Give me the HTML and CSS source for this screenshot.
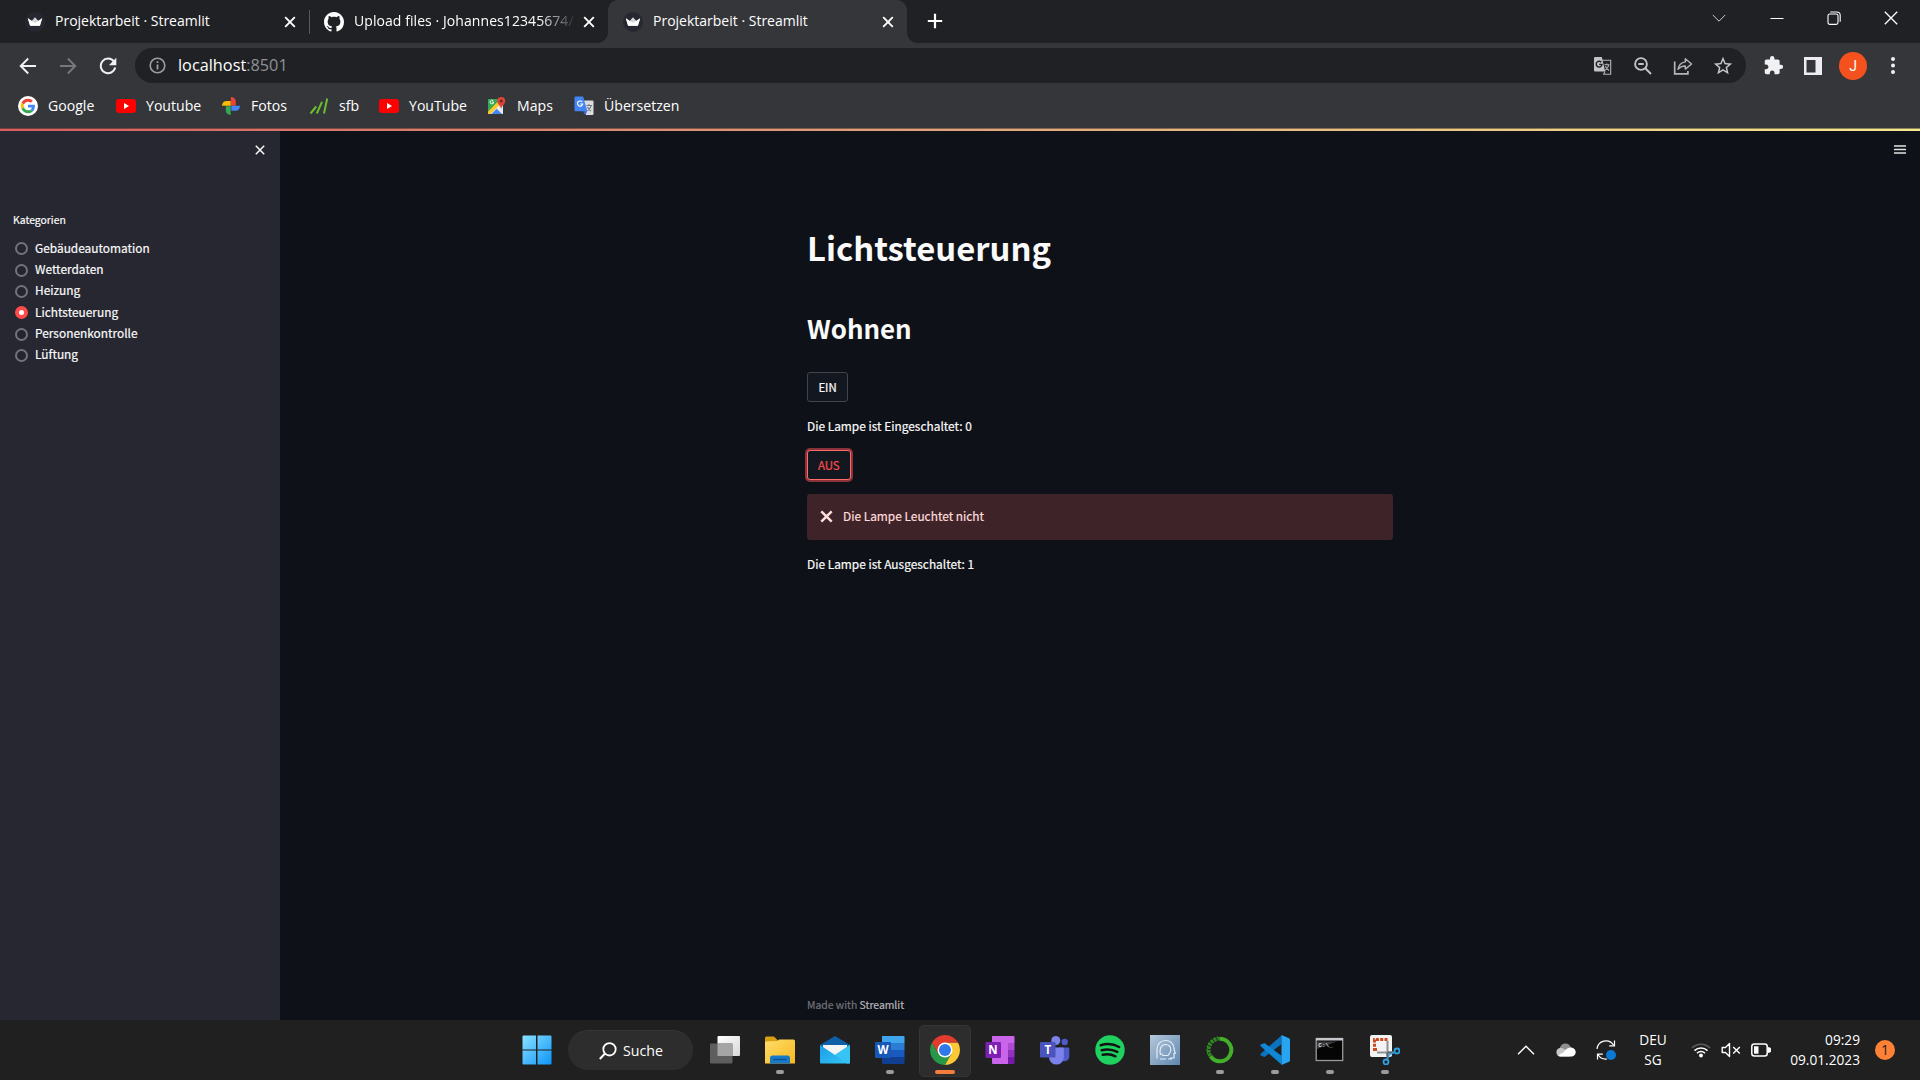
FILE: index.html
```html
<!DOCTYPE html>
<html lang="de">
<head>
<meta charset="utf-8">
<title>Projektarbeit · Streamlit</title>
<link rel="stylesheet" href="styles.css">
</head>
<body>
<svg class="defs" width="0" height="0">
  <defs>
    <linearGradient id="win" x1="0" y1="0" x2="1" y2="1"><stop offset="0" stop-color="#8be2ff"/><stop offset="1" stop-color="#0c94f8"/></linearGradient>
    <linearGradient id="folder" x1="0" y1="0" x2="1" y2="1"><stop offset="0" stop-color="#ffdc6b"/><stop offset="1" stop-color="#f6b91d"/></linearGradient>
    <linearGradient id="mail" x1="0" y1="0" x2="1" y2="1"><stop offset="0" stop-color="#1b9de8"/><stop offset="1" stop-color="#35c5f5"/></linearGradient>
    <linearGradient id="port" x1="0" y1="0" x2="1" y2="1"><stop offset="0" stop-color="#b4c8da"/><stop offset="1" stop-color="#5f86b0"/></linearGradient>
    <linearGradient id="view" x1="0" y1="0" x2="1" y2="1"><stop offset="0" stop-color="#ffffff"/><stop offset="1" stop-color="#d8d8d8"/></linearGradient>
    <symbol id="crown" viewBox="0 0 20 20"><circle cx="10" cy="10" r="10" fill="#262730"/><path d="M2.8 6.3 6.7 9 10 5.2 13.3 9l3.9-2.7-2.3 7.4H5.1z" fill="#d5d6da"/><path d="M2.8 6.3 10 11l7.2-4.7-2.3 7.4H5.1z" fill="#fff"/></symbol>
    <symbol id="x" viewBox="0 0 12 12"><path d="M1.2 1.2l9.6 9.6M10.8 1.2l-9.6 9.6" stroke="#fff" stroke-width="1.9" fill="none"/></symbol>
    <symbol id="yt" viewBox="0 0 20 20"><rect y="3" width="20" height="14" rx="3.2" fill="#f00"/><path d="M8 7.1v5.8l5-2.9z" fill="#fff"/></symbol>
  </defs>
</svg>

<header class="tabs">
  <div class="tab">
    <svg class="fav"><use href="#crown"/></svg><span class="tab-title">Projektarbeit · Streamlit</span><svg class="tab-x"><use href="#x"/></svg>
  </div>
  <div class="tab tab-divided">
    <svg class="fav" viewBox="0 0 16 16"><path fill="#fff" d="M8 0C3.58 0 0 3.58 0 8c0 3.54 2.29 6.53 5.47 7.59.4.07.55-.17.55-.38 0-.19-.01-.82-.01-1.49-2.01.37-2.53-.49-2.69-.94-.09-.23-.48-.94-.82-1.13-.28-.15-.68-.52-.01-.53.63-.01 1.08.58 1.23.82.72 1.21 1.87.87 2.33.66.07-.52.28-.87.51-1.07-1.78-.2-3.64-.89-3.64-3.95 0-.87.31-1.59.82-2.15-.08-.2-.36-1.02.08-2.12 0 0 .67-.21 2.2.82.64-.18 1.32-.27 2-.27s1.36.09 2 .27c1.53-1.04 2.2-.82 2.2-.82.44 1.1.16 1.92.08 2.12.51.56.82 1.27.82 2.15 0 3.07-1.87 3.75-3.65 3.95.29.25.54.73.54 1.48 0 1.07-.01 1.93-.01 2.2 0 .21.15.46.55.38A8.01 8.01 0 0 0 16 8c0-4.42-3.58-8-8-8z"/></svg><span class="tab-title tab-fade">Upload files · Johannes12345674/</span><svg class="tab-x"><use href="#x"/></svg>
  </div>
  <div class="tab tab-active">
    <svg class="fav"><use href="#crown"/></svg><span class="tab-title">Projektarbeit · Streamlit</span><svg class="tab-x"><use href="#x"/></svg>
  </div>
  <svg class="new-tab" viewBox="0 0 16 16"><path d="M8 .8v14.4M.8 8h14.4" stroke="#fff" stroke-width="2.2"/></svg>
  <div class="win-buttons">
    <svg viewBox="0 0 14 14"><path d="M.8 4 7 10.2 13.2 4" stroke="#cfcfd2" fill="none"/></svg>
    <svg viewBox="0 0 14 14"><path d="M.5 7.5h13" stroke="#fff"/></svg>
    <svg viewBox="0 0 14 14"><rect x="1" y="3" width="10" height="10.4" rx="1.8" stroke="#fff" stroke-width="1.1" fill="none"/><path d="M3.3 1h6.5a3.4 3.4 0 0 1 3.4 3.4v6.4" stroke="#fff" stroke-width="1.1" fill="none"/></svg>
    <svg viewBox="0 0 14 14"><path d="M.8.8l12.4 12.4M13.2.8.8 13.2" stroke="#fff" stroke-width="1.3"/></svg>
  </div>
</header>

<div class="toolbar">
  <span class="tool"><svg width="18" height="18" viewBox="0 0 18 18"><path d="M17 9H2M9.2 1.5 1.7 9l7.5 7.5" stroke="#f1f1f4" stroke-width="1.9" fill="none"/></svg></span>
  <span class="tool"><svg width="18" height="18" viewBox="0 0 18 18"><path d="M1 9h15M8.8 1.5 16.3 9l-7.5 7.5" stroke="#77787b" stroke-width="1.9" fill="none"/></svg></span>
  <span class="tool"><svg width="18" height="18" viewBox="0 0 18 18"><path d="M15 4.6A7.3 7.3 0 1 0 16.2 10.6" stroke="#f1f1f4" stroke-width="2" fill="none"/><path d="M17.3.8v7.4H9.9z" fill="#f1f1f4"/></svg></span>
  <div class="omnibox">
    <svg class="info" width="17" height="17" viewBox="0 0 17 17"><circle cx="8.5" cy="8.5" r="7.3" stroke="#9a9da1" stroke-width="1.6" fill="none"/><path d="M8.5 7.5v5M8.5 4.2v1.9" stroke="#9a9da1" stroke-width="1.8"/></svg>
    <span class="url">localhost<span class="port">:8501</span></span>
    <span class="tool"><svg width="18" height="18" viewBox="0 0 18 18"><path d="M7.5 3.3h9.2v13.9H9.3" stroke="#b4b5b9" stroke-width="1.1" fill="none"/><path d="M1.2 0h6.6l3.4 14.5h-10A1.2 1.2 0 0 1 0 13.3V1.2A1.2 1.2 0 0 1 1.2 0z" fill="#c2c3c7"/><path d="M7.3 5.2A2.9 2.9 0 1 0 8 7.4H5.2" stroke="#202124" stroke-width="1.4" fill="none"/><path d="M10.3 7.8h5.2M12.9 6.6v1.2M14.7 8c-.5 2.4-1.7 4.2-3.5 5.3M11.3 9.2c.9 2 2.1 3.3 3.8 4.2M9.5 17.2l1.6-2.7" stroke="#b4b5b9" stroke-width="1.1" fill="none"/></svg></span>
    <span class="tool"><svg width="18" height="18" viewBox="0 0 18 18"><circle cx="7" cy="7" r="5.9" stroke="#c2c3c7" stroke-width="1.9" fill="none"/><path d="M4.3 7h5.4M11.3 11.3l5.7 5.7" stroke="#c2c3c7" stroke-width="2"/></svg></span>
    <span class="tool"><svg width="20" height="18" viewBox="0 0 20 18"><path d="M1.7 4.5v12.4h13.2v-3" stroke="#b4b5b9" stroke-width="1.7" fill="none"/><path d="M12.3 1.7 18.6 7l-6.3 5.1V9C9.2 9 7 9.8 5 12.3c.6-3.9 3-6.7 7.3-7.4z" stroke="#b4b5b9" stroke-width="1.4" stroke-linejoin="round" fill="none"/></svg></span>
    <span class="tool"><svg width="22" height="22" viewBox="0 0 24 24"><path fill="#c8c9cd" d="M22 9.24l-7.19-.62L12 2 9.19 8.63 2 9.24l5.46 4.73L5.82 21 12 17.27 18.18 21l-1.63-7.03L22 9.24zM12 15.4l-3.76 2.27 1-4.28-3.32-2.88 4.38-.38L12 6.1l1.71 4.04 4.38.38-3.32 2.88 1 4.28L12 15.4z"/></svg></span>
  </div>
  <span class="tool"><svg width="21" height="21" viewBox="0 0 24 24"><path fill="#f1f1f4" d="M20.5 11H19V7c0-1.1-.9-2-2-2h-4V3.5a2.5 2.5 0 0 0-5 0V5H4c-1.1 0-1.99.9-1.99 2v3.8H3.5c1.49 0 2.7 1.21 2.7 2.7s-1.21 2.7-2.7 2.7H2V20c0 1.1.9 2 2 2h3.800v-1.5c0-1.49 1.21-2.7 2.7-2.7s2.7 1.21 2.7 2.7V22H17c1.1 0 2-.9 2-2v-4h1.5a2.5 2.5 0 0 0 0-5z"/></svg></span>
  <span class="tool"><svg width="18" height="18" viewBox="0 0 18 18"><path fill="#ececf2" fill-rule="evenodd" d="M0 0h18v18H0zM2.5 3v12.5h9V3z"/></svg></span>
  <span class="tool"><span class="avatar">J</span></span>
  <span class="tool"><svg width="4" height="17" viewBox="0 0 4 17"><circle cx="2" cy="2" r="2" fill="#f1f1f4"/><circle cx="2" cy="8.5" r="2" fill="#f1f1f4"/><circle cx="2" cy="15" r="2" fill="#f1f1f4"/></svg></span>
</div>

<nav class="bookmarks">
  <span class="bm"><svg viewBox="0 0 20 20"><circle cx="10" cy="10" r="10" fill="#fff"/><g transform="translate(2.8 2.8) scale(.3)"><path fill="#EA4335" d="M24 9.5c3.54 0 6.71 1.22 9.21 3.6l6.85-6.85C35.9 2.38 30.47 0 24 0 14.62 0 6.51 5.38 2.56 13.22l7.98 6.19C12.43 13.72 17.74 9.5 24 9.5z"/><path fill="#4285F4" d="M46.98 24.55c0-1.57-.15-3.09-.38-4.55H24v9.02h12.94c-.58 2.96-2.26 5.48-4.78 7.18l7.73 6c4.51-4.18 7.09-10.36 7.09-17.65z"/><path fill="#FBBC05" d="M10.53 28.59c-.48-1.45-.76-2.99-.76-4.59s.27-3.14.76-4.59l-7.98-6.19C.92 16.46 0 20.12 0 24c0 3.88.92 7.54 2.56 10.78l7.97-6.19z"/><path fill="#34A853" d="M24 48c6.48 0 11.93-2.13 15.89-5.81l-7.73-6c-2.15 1.45-4.92 2.3-8.16 2.3-6.26 0-11.57-4.22-13.47-9.91l-7.98 6.19C6.51 42.62 14.62 48 24 48z"/></g></svg>Google</span>
  <span class="bm"><svg><use href="#yt"/></svg>Youtube</span>
  <span class="bm"><svg viewBox="0 0 20 20"><path fill="#ea4335" d="M9.8 1c2.800 0 5 2 5 4.700v4h-5z"/><path fill="#4285f4" d="M19 9.700c0 2.900-2 5.100-4.700 5.100h-4V9.700z"/><path fill="#34a853" d="M9.700 19c-2.800 0-4.900-2-4.900-4.700v-4h4.900z"/><path fill="#fbbc05" d="M1 9.800C1 7 3 5 5.700 5h4v4.800z"/></svg>Fotos</span>
  <span class="bm"><svg viewBox="0 0 20 20"><path d="M1.500 17.500l5.700-7M7.800 17.500 13 5.800M15 17.500 18.200 2.500" stroke="#6cbe30" stroke-width="2"/></svg>sfb</span>
  <span class="bm"><svg><use href="#yt"/></svg>YouTube</span>
  <span class="bm"><svg viewBox="0 0 20 20"><path d="M1 3h15v15H1z" fill="#34a853"/><path d="M1 18 15 4l1 14z" fill="#e9eaec"/><path d="M1 15.500 13.500 3l2.500 2.500L3.500 18H1z" fill="#fbc92c"/><path d="M4.500 18l5.200-5.200 5.300 5.200z" fill="#4285f4"/><path d="M9.700 12.300 16 18V7z" fill="#e9eaec"/><path d="M14.200 13c-.5-3.500-4-4.700-4-8a4 4 0 0 1 8 0c0 3.300-3.500 4.500-4 8z" fill="#db4437"/><circle cx="14.200" cy="5" r="1.500" fill="#7b231d"/><path d="M6.200 4.800a1.800 1.800 0 1 0 .5 1.400H5" stroke="#fff" stroke-width="1" fill="none"/></svg>Maps</span>
  <span class="bm"><svg viewBox="0 0 20 20"><path d="M8 4.500h10.500a1 1 0 0 1 1 1V18a1 1 0 0 1-1 1H12z" fill="#dadce0"/><path d="M12.500 9.500h5.500M15 8v1.500M17 9.800c-.5 2.200-1.700 3.800-3.500 5M13.500 11c.8 1.800 2 3 3.500 4" stroke="#737a85" stroke-width="1.1" fill="none"/><path d="M1.500.5h7.600l4.300 14.800H1.500a1 1 0 0 1-1-1V1.500a1 1 0 0 1 1-1z" fill="#4285f4"/><path d="M9 15.300h4.400L11 19z" fill="#3367d6"/><path d="M8.200 6A2.600 2.600 0 1 0 8.700 8H6.200" stroke="#fff" stroke-width="1.2" fill="none"/></svg>Übersetzen</span>
</nav>

<div class="app">
  <aside class="sidebar">
    <svg class="side-x" viewBox="0 0 10 10"><path d="M.8.8l8.4 8.4M9.2.8.8 9.2" stroke="#fafafa" stroke-width="1.5"/></svg>
    <div class="side-label">Kategorien</div>
    <div class="radios">
      <label><i></i><span>Gebäudeautomation</span></label>
      <label><i></i><span>Wetterdaten</span></label>
      <label><i></i><span>Heizung</span></label>
      <label><i class="on"></i><span>Lichtsteuerung</span></label>
      <label><i></i><span>Personenkontrolle</span></label>
      <label><i></i><span>Lüftung</span></label>
    </div>
  </aside>
  <main class="main">
    <svg class="menu" viewBox="0 0 12 9"><path d="M0 1h12M0 4.500h12M0 8h12" stroke="#e2e3e5" stroke-width="1.6"/></svg>
    <div class="block">
      <h1>Lichtsteuerung</h1>
      <h2>Wohnen</h2>
      <button class="btn">EIN</button>
      <p>Die Lampe ist Eingeschaltet: 0</p>
      <button class="btn btn-focus">AUS</button>
      <div class="alert"><svg viewBox="0 0 13 13"><path d="M1.300 1.300l10.400 10.400M11.700 1.300 1.300 11.700" stroke="#ffdede" stroke-width="2.5"/></svg>Die Lampe Leuchtet nicht</div>
      <p>Die Lampe ist Ausgeschaltet: 1</p>
      <footer>Made with <span>Streamlit</span></footer>
    </div>
  </main>
  <div class="rainbow"></div>
</div>

<div class="taskbar">
  <span class="task"><svg viewBox="0 0 30 30"><path fill="url(#win)" d="M1.500.5H14v14H.5v-13a1 1 0 0 1 1-1zM15.500.5h13a1 1 0 0 1 1 1v13h-14zM.5 15.500H14v14H1.500a1 1 0 0 1-1-1zM15.500 15.500h14v13a1 1 0 0 1-1 1h-13z"/></svg></span>
  <div class="search"><svg viewBox="0 0 18 18"><circle cx="10.500" cy="7.300" r="6.200" stroke="#fff" stroke-width="1.800" fill="none"/><path d="M6 11.500.8 17" stroke="#fff" stroke-width="2"/></svg>Suche</div>
  <span class="task"><svg viewBox="0 0 30 30"><rect x="7.500" y="1" width="22.500" height="20" rx="1" fill="url(#view)"/><rect y="8.500" width="22.500" height="20" rx="1" fill="#5e5e5e"/><path d="M7.500 8.500h15V21h-15z" fill="#a5a5a5"/></svg></span>
  <span class="task run"><svg viewBox="0 0 30 30"><path d="M0 8V3a1.500 1.500 0 0 1 1.500-1.500H9L12.500 5v3z" fill="#d99f10"/><path d="M0 6.500 12 6l2-1.500h14.500A1.500 1.500 0 0 1 30 6v22.500H0z" fill="url(#folder)"/><path d="M5 28.500V23a2.500 2.500 0 0 1 2.500-2.500h15A2.500 2.500 0 0 1 25 23v5.500z" fill="#1779c8"/><path d="M8.500 24.500h13" stroke="#0b4f8e" stroke-width="1.3"/></svg></span>
  <span class="task"><svg viewBox="0 0 30 30"><path d="M0 10 15 1l15 9v6H0z" fill="#0f5ea8"/><path d="M3 10h24v10H3z" fill="#f2f4f6"/><path d="M0 10l15 10 15-10v17.500a1 1 0 0 1-1 1H1a1 1 0 0 1-1-1z" fill="url(#mail)"/><path d="M15 20l15-10v17.500a1 1 0 0 1-1 1h-2z" fill="#36c4f4"/></svg></span>
  <span class="task run"><svg viewBox="0 0 30 30"><path d="M7 1h21.500a1 1 0 0 1 1 1v6H7z" fill="#41a5ee"/><path d="M7 8h22.500v7H7z" fill="#2b7cd3"/><path d="M7 15h22.500v7H7z" fill="#185abd"/><path d="M7 22h22.500v6a1 1 0 0 1-1 1H8a1 1 0 0 1-1-1z" fill="#103f91"/><rect y="7" width="16" height="16" rx="1.200" fill="#1857b8"/><text x="8" y="19" class="glyph">W</text></svg></span>
  <span class="task current"><svg viewBox="0 0 30 30"><path d="M2.010 7.500A15 15 0 0 0 15 30l6.500-11.250L8.500 18.750z" fill="#279847"/><path d="M27.990 7.500A15 15 0 0 1 15 30l6.500-11.250L15 7.500z" fill="#fcc934"/><path d="M2.010 7.500 8.500 18.750 15 7.500h12.990A15 15 0 0 0 2.010 7.500z" fill="#e33b2e"/><circle cx="15" cy="15" r="7.500" fill="#fff"/><circle cx="15" cy="15" r="6" fill="#2f78e8"/></svg></span>
  <span class="task"><svg viewBox="0 0 30 30"><path d="M7 1h21.500a1 1 0 0 1 1 1v6H7z" fill="#ca64ea"/><path d="M7 1h16v28H8a1 1 0 0 1-1-1z" fill="#ca64ea"/><path d="M23 8h6.500v7H23z" fill="#ae4bd5"/><path d="M23 15h6.500v7H23z" fill="#9332bf"/><path d="M23 22h6.500v6a1 1 0 0 1-1 1H23z" fill="#7719aa"/><rect x=".5" y="7" width="15.500" height="16" rx="1.200" fill="#7d1fb3"/><text x="8" y="19" class="glyph">N</text></svg></span>
  <span class="task"><svg viewBox="0 0 30 30"><circle cx="24.700" cy="7" r="3.200" fill="#5059c9"/><path d="M19 12.500h9a1.300 1.300 0 0 1 1.300 1.300v7.500a5.200 5.200 0 0 1-9 3.500z" fill="#5059c9"/><circle cx="15.800" cy="5.500" r="4.500" fill="#7b83eb"/><path d="M9 12.500h13.500a1.300 1.300 0 0 1 1.300 1.300v8.400a7 7 0 0 1-14.800 0z" fill="#7b83eb"/><rect y="7" width="15.500" height="15.500" rx="1.200" fill="#4b53bc"/><text x="7.800" y="18.800" class="glyph">T</text></svg></span>
  <span class="task"><svg viewBox="0 0 30 30"><circle cx="15" cy="15" r="14.700" fill="#1fd15f"/><path d="M5.700 10.200c6.300-1.800 13-1.200 18.500 1.800M6.700 15.200c5.200-1.400 10.700-.9 15.600 1.700M7.700 19.800c4.400-1.100 8.600-.7 12.700 1.500" stroke="#121212" stroke-width="2.500" stroke-linecap="round" fill="none"/></svg></span>
  <span class="task"><svg viewBox="0 0 30 30"><path fill="url(#port)" d="M0 0h30v30H0z"/><path d="M7 23.500V14c0-5 4-8.500 8.700-8.500S24 9 24 13.500l1.200 5H24v4.500h-4M10.500 20c-1.500-6 .5-10.500 5-10.500s6.500 4 4.500 8l-2 3h-5l-1.500-2M10 24h6M18 24h4" stroke="#e4edf5" stroke-width="1.2" fill="none"/></svg></span>
  <span class="task run"><svg viewBox="0 0 30 30"><path d="M15 3.700a11.300 11.300 0 1 1-9.500 17.500" stroke="#43b02a" stroke-width="4" fill="none"/><path d="M15 3.700A11.300 11.300 0 0 0 5.500 21.200" stroke="#2d8a22" stroke-width="3.800" stroke-dasharray="2.600 .9" fill="none"/><path d="M13 2A13 13 0 0 0 3 20" stroke="#43b02a" stroke-width="1" stroke-dasharray="1.500 2" fill="none"/></svg></span>
  <span class="task run"><svg viewBox="0 0 30 30"><path d="M1 18.500 21.500.5v8.700L4.500 22 .8 20.500a1.300 1.300 0 0 1 .2-2z" fill="#0b72bd"/><path d="M1 11.500 21.500 29.500v-8.700L4.500 8 .8 9.500a1.300 1.300 0 0 0 .2 2z" fill="#0f86d6"/><path d="M21.500 0 29 3.300a1.700 1.700 0 0 1 1 1.500v20.400a1.700 1.700 0 0 1-1 1.500L21.500 30z" fill="#28a5f0"/></svg></span>
  <span class="task run"><svg viewBox="0 0 30 30"><rect x="1.200" y="3.500" width="26.500" height="22" fill="#050505" stroke="#9b9b9b" stroke-width="1.300"/><path d="M1 3h27v2.500H1z" fill="#c5c7ca"/><path d="M2 6.500h20L2 14z" fill="#3a3a3a"/><text x="3.300" y="11.500" class="prompt">C:\_</text></svg></span>
  <span class="task run"><svg viewBox="0 0 30 30"><rect width="22" height="22" rx="2" fill="#f3f3f3"/><path d="M4.500 16V4.500H16V7M4.500 14.500H7" stroke="#cc4a1f" stroke-width="3" stroke-dasharray="3 1.300" fill="none"/><path d="M17.500 6v15M7 17.500h16" stroke="#8d9196" stroke-width="2"/><path d="M17.500 17.500v6M17.500 17.500h6" stroke="#5c646c" stroke-width="2"/><circle cx="27" cy="16" r="2.500" stroke="#2fa0e4" stroke-width="1.800" fill="none"/><circle cx="16" cy="27" r="2.500" stroke="#2fa0e4" stroke-width="1.800" fill="none"/><path d="M24.800 17l-5.300 2.500M17 24.800l2.500-5.300" stroke="#2fa0e4" stroke-width="1.400"/></svg></span>
  <div class="tray">
    <span class="tray-item"><svg width="18" height="10" viewBox="0 0 18 10"><path d="M1 9.200 9 1.200l8 8" stroke="#fff" stroke-width="1.400" fill="none"/></svg></span>
    <span class="tray-item"><svg width="20" height="14" viewBox="0 0 20 14"><path d="M4 5a5.500 5.500 0 0 1 10.300-1.500L17 8H4z" fill="#8f8f8f"/><path d="M4.300 13.500a4.300 4.300 0 0 1-.8-8.400C7 3.800 9 7.500 12 9l2 4.500z" fill="#c6c6c6"/><path d="M2.500 12.900c1-2 3-2.500 4.500-2.900C9 7.500 10.500 5.500 14 4.600a4.300 4.300 0 0 1 2.200 8.900H4.300z" fill="#fff"/></svg></span>
    <span class="tray-item sync"><svg width="20" height="20" viewBox="0 0 20 20"><path d="M1 9a9 9 0 0 1 16.500-4M18.500.5v5.300h-5.300M1.500 19.500v-5.300h5.300M2 14.500a9 9 0 0 0 9 4.500" stroke="#fff" stroke-width="1.200" fill="none"/><circle cx="15" cy="15" r="5" fill="#0a78d4"/></svg></span>
    <div class="lang">DEU<br>SG</div>
    <span class="tray-item"><svg width="20" height="16" viewBox="0 0 20 16"><path d="M1 6a12.700 12.700 0 0 1 18 0" stroke="#5d5d5d" stroke-width="1.500" fill="none"/><path d="M3.500 8.600a9.200 9.200 0 0 1 13 0M6 11.200a5.700 5.700 0 0 1 8 0" stroke="#fff" stroke-width="1.500" fill="none"/><circle cx="10" cy="13.500" r="1.900" fill="#fff"/></svg></span>
    <span class="tray-item"><svg width="20" height="16" viewBox="0 0 20 16"><path d="M1.200 5.500h3.300l4-4v13l-4-4H1.200z" stroke="#fff" stroke-width="1.400" stroke-linejoin="round" fill="none"/><path d="M12.200 5l6.600 6.600M18.800 5l-6.600 6.600" stroke="#fff" stroke-width="1.400"/></svg></span>
    <span class="tray-item"><svg width="20" height="14" viewBox="0 0 20 14"><rect x=".8" y="1" width="15.400" height="12" rx="2.500" stroke="#fff" stroke-width="1.500" fill="none"/><rect x="3" y="3.300" width="4.500" height="7.400" fill="#fff"/><path d="M17.500 4.500a2.500 2.500 0 0 1 0 5z" fill="#fff" stroke="#fff"/></svg></span>
    <div class="clock">09:29<br>09.01.2023</div>
    <span class="badge">1</span>
  </div>
</div>
</body>
</html>
```
FILE: styles.css
```css
* { box-sizing: border-box; }
body {
  margin: 0; width: 1920px; height: 1080px; overflow: hidden;
  display: flex; flex-direction: column;
  background: #0e1117; color: #fff;
  font: 14px/20px "Open Sans", "Noto Sans", sans-serif;
}
svg { display: block; flex: none; }
.defs { position: absolute; }

/* tab strip */
.tabs { height: 43px; flex: none; display: flex; align-items: stretch; background: #202124; padding-left: 10px; }
.tab { width: 299px; display: flex; align-items: center; padding: 0 13px 0 15px; position: relative; }
.fav { width: 20px; height: 20px; margin-right: 10px; flex: none; }
.tab-title { width: 222px; white-space: nowrap; overflow: hidden; margin-top: -1px; flex: none; }
.tab-fade { letter-spacing: .07px; -webkit-mask-image: linear-gradient(90deg, #000 185px, transparent 222px); mask-image: linear-gradient(90deg, #000 185px, transparent 222px); }
.tab-x { width: 12px; height: 12px; margin-left: 7px; }
.tab-divided::before { content: ""; position: absolute; left: 0; top: 10px; width: 1px; height: 24px; background: #57585b; }
.tab-active { background: #35363a; border-radius: 10px 10px 0 0; }
.tab-active::before, .tab-active::after { content: ""; position: absolute; bottom: 0; width: 10px; height: 10px; }
.tab-active::before { left: -10px; background: radial-gradient(circle at 0 0, transparent 9.5px, #35363a 10px); }
.tab-active::after { right: -10px; background: radial-gradient(circle at 100% 0, transparent 9.5px, #35363a 10px); }
.new-tab { width: 16px; height: 16px; margin: 13px 0 0 20px; }
.win-buttons { margin-left: auto; display: grid; grid-template-columns: 58px 57px 57px 58px; justify-items: center; padding-top: 11px; }
.win-buttons svg { width: 14px; height: 14px; }

/* toolbar */
.toolbar { height: 45px; flex: none; display: flex; align-items: center; background: #35363a; padding: 0 7px 0 8px; }
.tool { width: 40px; height: 35px; display: flex; align-items: center; justify-content: center; flex: none; }
.omnibox { flex: 1; height: 35px; margin: 0 7px; padding: 0 3px 0 14px; display: flex; align-items: center; border-radius: 18px; background: #202124; }
.info { margin-right: 12px; }
.url { flex: 1; font-size: 16.3px; margin-top: -1px; }
.port { color: #8d9094; }
.avatar { width: 28px; height: 28px; border-radius: 50%; background: #f4511e; text-align: center; font: 14px/28px Roboto, sans-serif; }

/* bookmarks */
.bookmarks { height: 40px; flex: none; display: grid; grid-template-columns: 98px 105px 88px 70px 108px 87px 110px; align-items: center; background: #35363a; padding: 0 0 5px 18px; font-size: 14.1px; }
.bm { display: flex; align-items: center; gap: 10px; white-space: nowrap; }
.bm svg { width: 20px; height: 20px; }

/* streamlit page */
.app { flex: 1; min-height: 0; display: flex; position: relative; font-family: "Noto Sans CJK SC", "Noto Sans", sans-serif; font-size: 11.9px; color: #fafafa; -webkit-text-stroke: .2px; }
.rainbow { position: absolute; left: 0; right: 0; top: 0; height: 3px; background: linear-gradient(rgba(14, 17, 23, .45) 1px, transparent 1px), linear-gradient(90deg, #d4605f, #e0a47c 50%, #f6e98e); }
.sidebar { width: 280px; background: #262730; padding: 17px 15px 0 13px; display: flex; flex-direction: column; }
.side-x { width: 10px; height: 10px; align-self: flex-end; }
.side-label { margin-top: 55px; font-size: 10.4px; line-height: 20px; }
.radios { margin: 8px 0 0 2px; }
.radios label { display: flex; align-items: center; height: 21.35px; line-height: 20px; }
.radios span { margin-bottom: 2px; }
.radios i { width: 13px; height: 13px; margin-right: 7px; border: 2px solid #72737b; border-radius: 50%; background: #24252e; }
.radios i.on { border: 4px solid #ff4b4b; background: #fff; }
.main { flex: 1; display: flex; flex-direction: column; align-items: center; position: relative; }
.menu { position: absolute; right: 14px; top: 17px; width: 12px; height: 9px; }
.block { flex: 1; width: 586px; display: flex; flex-direction: column; align-items: flex-start; padding-top: 94px; }
h1, h2, p { margin: 0; }
h1, h2 { -webkit-text-stroke: 0; }
h1 { font-size: 32.8px; line-height: 50px; font-weight: 700; }
h2 { font-size: 25.9px; line-height: 40px; font-weight: 700; margin-top: 36px; }
.btn { height: 30px; padding: 0 10.4px; margin-top: 24px; border: 1px solid #41444c; border-radius: 3px; background: #131720; color: #fafafa; font: inherit; font-size: 11.4px; line-height: 28px; }
p { line-height: 20px; margin-top: 14px; }
p + .btn { margin-top: 14px; }
.btn-focus { padding: 0 10px; border-color: #ff6b6b; color: #ff4b4b; box-shadow: 0 0 0 2px #8b3238; }
.alert { width: 586px; height: 46px; margin-top: 14px; padding: 0 0 2px 13px; display: flex; align-items: center; gap: 10px; border-radius: 3px; background: #3e2428; color: #ffdede; }
.alert svg { width: 13px; height: 13px; }
footer { margin-top: auto; margin-bottom: 5px; font-size: 10.4px; line-height: 20px; color: #71747a; }
footer span { color: #b6b7ba; }

/* taskbar */
.taskbar { height: 60px; flex: none; display: flex; align-items: center; background: #202020; padding-left: 509px; }
.task { width: 55px; height: 60px; display: flex; align-items: center; justify-content: center; position: relative; flex: none; }
.task svg { width: 30px; height: 30px; position: relative; }
.run::after, .current::after { content: ""; position: absolute; bottom: 6px; width: 8px; height: 4px; border-radius: 2px; background: #9b9b9b; }
.current::after { width: 20px; background: #f47c3c; }
.current::before { content: ""; position: absolute; left: 2px; top: 5px; width: 50px; height: 50px; border-radius: 5px; background: #2d2d2d; border: 1px solid #353535; }
.search { width: 125px; height: 40px; margin: 0 4px; padding-left: 31px; display: flex; align-items: center; gap: 6px; border-radius: 20px; background: #2d2d2d; border-top: 1px solid #353535; font-size: 14.2px; flex: none; }
.search svg { width: 18px; height: 18px; }
.glyph { font: 700 11.5px "Open Sans", sans-serif; fill: #fff; text-anchor: middle; }
.prompt { font: 700 6px "Liberation Mono", monospace; fill: #ddd; }
.tray { margin-left: auto; padding-right: 25px; display: flex; align-items: center; font-size: 13.7px; }
.tray-item { width: 30px; display: flex; justify-content: center; }
.tray-item:first-child { width: 50px; }
.tray .sync { width: 44px; margin-left: 3px; }
.lang { width: 50px; text-align: center; margin-right: 8px; }
.clock { width: 84px; text-align: right; }
.badge { width: 20px; height: 20px; margin-left: 15px; border-radius: 50%; background: #ff8136; color: #202020; text-align: center; font-size: 14px; }
```
